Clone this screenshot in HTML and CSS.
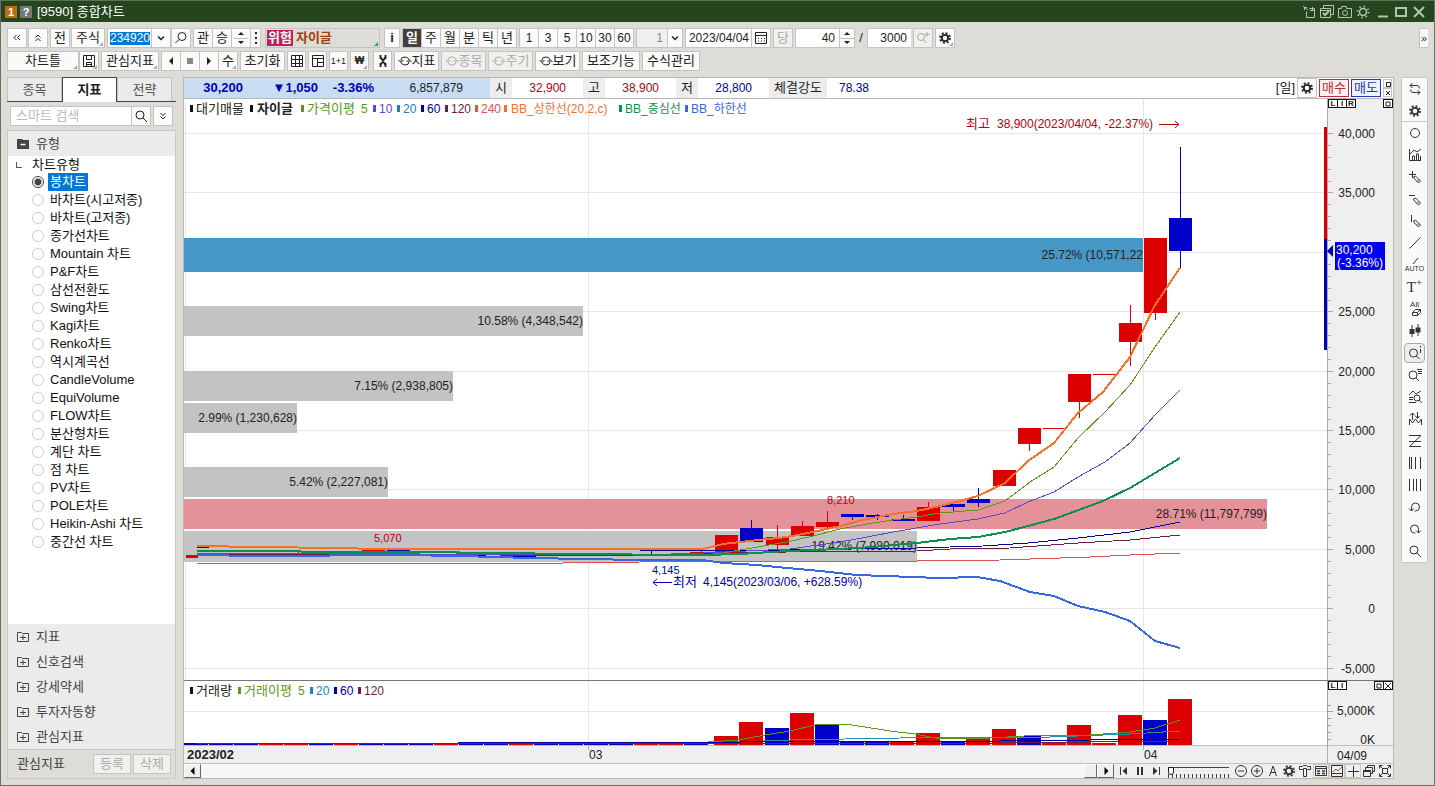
FILE: index.html
```
<!DOCTYPE html>
<html lang="ko">
<head>
    <meta charset="UTF-8">
    <meta name="viewport" content="width=device-width, initial-scale=1.0">
    <title>[9590] 종합차트</title>
    <link rel="stylesheet" href="styles.css">
</head>
<body>

    <!-- Icon set -->
    <svg class="sprite" aria-hidden="true">
        <symbol id="gear" viewBox="0 0 14 14"><circle cx="7" cy="7" r="3.2" stroke-width="1.800"/><circle cx="7" cy="7" r="5" stroke-width="1.800" stroke-dasharray="1.960 1.960"/></symbol>
        <symbol id="search" viewBox="0 0 14 14"><circle cx="6" cy="6" r="4"/><path d="M9 9l4 4"/></symbol>
        <symbol id="search-flip" viewBox="0 0 14 14"><circle cx="8" cy="5.500" r="4"/><path d="M5 8.500L1.500 12"/></symbol>
        <symbol id="down" viewBox="0 0 14 14"><path d="M4 5.500l3 3 3-3" stroke-width="1.500"/></symbol>
        <symbol id="dbl-left" viewBox="0 0 14 14"><path d="M6.500 4L4 6.500 6.500 9M10 4L7.500 6.500 10 9"/></symbol>
        <symbol id="dbl-up" viewBox="0 0 14 14"><path d="M4.500 6.500L7 4l2.500 2.500M4.500 10L7 7.500 9.500 10"/></symbol>
        <symbol id="dbl-down" viewBox="0 0 14 14"><path d="M4.500 4L7 6.500 9.500 4M4.500 7.500L7 10l2.500-2.500"/></symbol>
        <symbol id="cycle" viewBox="0 0 14 14"><path d="M3 7.500V6q0-3 4-3 3 0 4 2.500M11 6.500V8q0 3-4 3-3 0-4-2.500M0.500 6L3 8.500 5.500 6M8.500 8L11 5.500 13.500 8"/></symbol>
        <symbol id="folder-plus" viewBox="0 0 12 12"><path d="M.5 10.500v-9h4l1 1h6v8zM3 6.500h6M6 4v5"/></symbol>
        <symbol id="pencil" viewBox="0 0 14 14"><path d="M5.500 7l2-1 5 5-2 2-4-4zM11 9.500l-2 2"/></symbol>
    </svg>

    <div class="window">
        <header class="titlebar">
            <span class="badge badge-orange">1</span>
            <span class="badge badge-gray">?</span>
            <h1>[9590] 종합차트</h1>
            <div class="title-tools">
                <button type="button" aria-label="창 이동"><svg viewBox="0 0 14 14"><path d="M5 2.500H2.500V5M1 1l5 4M4.500 6.500v6h8v-9h-5M8 5.500h4M10.500 2v3"/></svg></button>
                <button type="button" aria-label="화면 선택"><svg viewBox="0 0 14 14"><path d="M3.500 3V.5h10v9H11M.5 3.500h10v9H.5zM.5 5.500h10"/><path d="M3 8l2 2 4-4" stroke-width="2"/></svg></button>
                <button type="button" aria-label="캡처"><svg viewBox="0 0 14 14"><path d="M.5 3.500h3v-2h5v2h5v9H.5z"/><circle cx="7" cy="8" r="2.500"/></svg></button>
                <button type="button" aria-label="설정"><svg viewBox="0 0 14 14"><circle cx="7" cy="7" r="3.500" stroke-width="1.500"/><circle cx="7" cy="7" r="5.500" stroke-width="2" stroke-dasharray="1.300 3.020"/></svg></button>
                <button type="button" class="ml2" aria-label="최소화"><svg viewBox="0 0 14 14"><path d="M2 11.500h10" stroke-width="2"/></svg></button>
                <button type="button" aria-label="최대화"><svg viewBox="0 0 14 14"><path d="M2 3h10v8H2z" stroke-width="2"/></svg></button>
                <button type="button" aria-label="닫기"><svg viewBox="0 0 14 14"><path d="M2 2l10 10M12 2L2 12" stroke-width="2"/></svg></button>
            </div>
        </header>

        <div class="toolbars">
            <div class="toolbar">
                <div class="group spaced">
                    <button type="button" class="btn" aria-label="처음"><svg><use href="#dbl-left"/></svg></button>
                    <button type="button" class="btn" aria-label="접기"><svg><use href="#dbl-up"/></svg></button>
                </div>
                <div class="group spaced">
                    <button type="button" class="btn">전</button>
                    <button type="button" class="btn w34 corner">주식</button>
                </div>
                <div class="group">
                    <input type="text" class="box w44 code" value="234920" aria-label="종목코드">
                    <button type="button" class="btn" aria-label="종목 목록"><svg><use href="#down"/></svg></button>
                    <button type="button" class="btn" aria-label="종목 찾기"><svg><use href="#search-flip"/></svg></button>
                </div>
                <div class="group tight">
                    <button type="button" class="btn">관</button>
                    <button type="button" class="btn">승</button>
                    <button type="button" class="btn spin" aria-label="이전 다음"><svg viewBox="0 0 14 18"><path class="solid" d="M4 6l3-3 3 3zM4 12l3 3 3-3z"/><path class="rule" d="M0 9.500h14"/></svg></button>
                    <button type="button" class="btn w11" aria-label="더보기"><svg viewBox="0 0 10 14"><path d="M5 1v12" stroke-width="2" stroke-dasharray="2 3"/></svg></button>
                </div>
                <div class="stock corner ml2"><b class="danger">위험</b><b>자이글</b></div>
                <button type="button" class="btn w16 bold ml2">i</button>
                <div class="group tight">
                    <button type="button" class="btn dark">일</button>
                    <button type="button" class="btn">주</button>
                    <button type="button" class="btn">월</button>
                    <button type="button" class="btn">분</button>
                    <button type="button" class="btn">틱</button>
                    <button type="button" class="btn">년</button>
                </div>
                <div class="group tight num">
                    <button type="button" class="btn">1</button>
                    <button type="button" class="btn">3</button>
                    <button type="button" class="btn">5</button>
                    <button type="button" class="btn">10</button>
                    <button type="button" class="btn">30</button>
                    <button type="button" class="btn">60</button>
                </div>
                <div class="group">
                    <input type="text" class="box w31 off" value="1" aria-label="주기 값" disabled>
                    <button type="button" class="btn w16" aria-label="주기 목록"><svg><use href="#down"/></svg></button>
                </div>
                <div class="group">
                    <input type="text" class="box w66 date" value="2023/04/04" aria-label="날짜">
                    <button type="button" class="btn" aria-label="달력"><svg viewBox="0 0 14 14"><path d="M1.500 1.500h11v11h-11zM1.500 4.500h11"/><path d="M4 7.500h7M4 10h7" stroke-dasharray="1 2"/></svg></button>
                </div>
                <button type="button" class="btn" disabled>당</button>
                <div class="group">
                    <input type="text" class="box w44" value="40" aria-label="표시 개수">
                    <button type="button" class="btn spin w16" aria-label="개수 조정"><svg viewBox="0 0 14 18"><path class="solid" d="M4 6l3-3 3 3zM4 12l3 3 3-3z"/><path class="rule" d="M0 9.500h14"/></svg></button>
                    <span class="slash">/</span>
                    <input type="text" class="box w44" value="3000" aria-label="전체 개수">
                </div>
                <button type="button" class="btn" aria-label="확대" disabled><svg viewBox="0 0 14 14"><circle cx="5" cy="6" r="3.500"/><path d="M7.500 9l3 3M8.500 3.500h5M11 1v5"/></svg></button>
                <button type="button" class="btn corner" aria-label="환경설정"><svg><use href="#gear"/></svg></button>
                <button type="button" class="btn more" aria-label="펼치기">»</button>
            </div>
            <div class="toolbar">
                <div class="group">
                    <button type="button" class="btn w72 corner">차트틀</button>
                    <button type="button" class="btn corner" aria-label="저장"><svg viewBox="0 0 14 14"><path d="M1.500 1.500h11v11h-11zM4.500 1.500v4h5v-4M4.500 12.500v-4h5v4M4.500 10.500h5"/></svg></button>
                </div>
                <button type="button" class="btn w57 corner">관심지표</button>
                <div class="group tight">
                    <button type="button" class="btn" aria-label="이전"><svg viewBox="0 0 14 14"><path class="solid" d="M9 3v8L5 7z"/></svg></button>
                    <button type="button" class="btn" aria-label="정지"><svg viewBox="0 0 14 14"><path class="solid gray" d="M4 4h6v6H4z"/></svg></button>
                    <button type="button" class="btn" aria-label="다음"><svg viewBox="0 0 14 14"><path class="solid" d="M5 3v8l4-4z"/></svg></button>
                    <button type="button" class="btn corner">수</button>
                </div>
                <button type="button" class="btn w45">초기화</button>
                <button type="button" class="btn w19" aria-label="표"><svg viewBox="0 0 14 14"><path d="M1.500 1.500h11v11h-11zM1.500 5.500h11M1.500 9.500h11M5.500 1.500v11M9.500 1.500v11"/></svg></button>
                <button type="button" class="btn w19" aria-label="화면분할"><svg viewBox="0 0 14 14"><path d="M1.500 1.500h11v11h-11zM1.500 4.500h11M6.500 4.500v8M6.500 8.500h6"/></svg></button>
                <button type="button" class="btn w19 tiny">1+1</button>
                <button type="button" class="btn w19 corner won">₩</button>
                <button type="button" class="btn w19 ml2" aria-label="도구"><svg viewBox="0 0 14 14"><path d="M4.500 3l5 8M9.500 3l-5 8M4.500 1v4M9.500 1v4M4.500 9v4M9.500 9v4" stroke-width="1.800"/></svg></button>
                <button type="button" class="btn w45"><svg><use href="#cycle"/></svg>지표</button>
                <button type="button" class="btn w45" disabled><svg><use href="#cycle"/></svg>종목</button>
                <button type="button" class="btn w45" disabled><svg><use href="#cycle"/></svg>주기</button>
                <button type="button" class="btn w45"><svg><use href="#cycle"/></svg>보기</button>
                <button type="button" class="btn w57">보조기능</button>
                <button type="button" class="btn w57">수식관리</button>
            </div>
        </div>

        <div class="content">
            <aside class="sidebar">
                <nav class="tabs">
                    <button type="button">종목</button>
                    <button type="button" class="active">지표</button>
                    <button type="button">전략</button>
                </nav>
                <div class="search-row">
                    <input type="search" placeholder="스마트 검색" aria-label="스마트 검색">
                    <button type="button" class="btn" aria-label="검색"><svg><use href="#search"/></svg></button>
                    <button type="button" class="btn" aria-label="검색 옵션"><svg><use href="#dbl-down"/></svg></button>
                </div>
                <div class="side-panel">
                    <button type="button" class="fold open"><svg viewBox="0 0 12 12"><path class="solid" d="M0 1h5l1 1h6v9H0z"/><path d="M3.500 6.500h5" stroke="#fff" stroke-width="1.500"/></svg>유형</button>
                    <div class="tree">
                        <p class="tree-title">차트유형</p>
                        <label><input type="radio" name="type" checked><span>봉차트</span></label>
                        <label><input type="radio" name="type"><span>바차트(시고저종)</span></label>
                        <label><input type="radio" name="type"><span>바차트(고저종)</span></label>
                        <label><input type="radio" name="type"><span>종가선차트</span></label>
                        <label><input type="radio" name="type"><span>Mountain 차트</span></label>
                        <label><input type="radio" name="type"><span>P&amp;F차트</span></label>
                        <label><input type="radio" name="type"><span>삼선전환도</span></label>
                        <label><input type="radio" name="type"><span>Swing차트</span></label>
                        <label><input type="radio" name="type"><span>Kagi차트</span></label>
                        <label><input type="radio" name="type"><span>Renko차트</span></label>
                        <label><input type="radio" name="type"><span>역시계곡선</span></label>
                        <label><input type="radio" name="type"><span>CandleVolume</span></label>
                        <label><input type="radio" name="type"><span>EquiVolume</span></label>
                        <label><input type="radio" name="type"><span>FLOW차트</span></label>
                        <label><input type="radio" name="type"><span>분산형차트</span></label>
                        <label><input type="radio" name="type"><span>계단 차트</span></label>
                        <label><input type="radio" name="type"><span>점 차트</span></label>
                        <label><input type="radio" name="type"><span>PV차트</span></label>
                        <label><input type="radio" name="type"><span>POLE차트</span></label>
                        <label><input type="radio" name="type"><span>Heikin-Ashi 차트</span></label>
                        <label><input type="radio" name="type"><span>중간선 차트</span></label>
                    </div>
                    <button type="button" class="fold"><svg><use href="#folder-plus"/></svg>지표</button>
                    <button type="button" class="fold"><svg><use href="#folder-plus"/></svg>신호검색</button>
                    <button type="button" class="fold"><svg><use href="#folder-plus"/></svg>강세약세</button>
                    <button type="button" class="fold"><svg><use href="#folder-plus"/></svg>투자자동향</button>
                    <button type="button" class="fold"><svg><use href="#folder-plus"/></svg>관심지표</button>
                    <div class="side-foot">
                        <span>관심지표</span>
                        <button type="button" class="btn w38" disabled>등록</button>
                        <button type="button" class="btn w38" disabled>삭제</button>
                    </div>
                </div>
            </aside>

            <main class="chart">
                <div class="quote">
                    <div class="quote-main">
                        <b class="price">30,200</b>
                        <b class="diff">▼1,050</b>
                        <b class="rate">-3.36%</b>
                        <span class="volume">6,857,879</span>
                    </div>
                    <span class="tag">시</span><span class="val up">32,900</span>
                    <span class="tag">고</span><span class="val up">38,900</span>
                    <span class="tag">저</span><span class="val down">28,800</span>
                    <span class="tag long">체결강도</span><span class="val short down">78.38</span>
                    <div class="quote-tools">
                        <span>[일]</span>
                        <button type="button" class="btn" aria-label="차트 설정"><svg><use href="#gear"/></svg></button>
                        <button type="button" class="trade buy">매수</button>
                        <button type="button" class="trade sell">매도</button>
                        <div class="mini">
                            <button type="button" aria-label="크게"><svg viewBox="0 0 8 8"><path d="M2.500 2.500h4v4h-4z"/></svg></button>
                            <button type="button" aria-label="닫기"><svg viewBox="0 0 8 8"><path d="M2 2l4 4M6 2L2 6"/></svg></button>
                        </div>
                    </div>
                </div>

                <div class="pane price-pane">
                    <svg id="price" viewBox="184 99 1209 581" role="img" aria-label="주가 차트">
                        <rect class="axis-bg" x="1328" y="99" width="65" height="581"/>
                        <g id="priceGrid"></g>
                        <path class="grid" d="M185.500 99V680M588.500 99V680M1143.500 99V680"/>
                        <g id="profile"></g>
                        <g class="ink">
                            <text x="583" y="325" text-anchor="end">10.58% (4,348,542)</text>
                            <text x="453" y="390" text-anchor="end">7.15% (2,938,805)</text>
                            <text x="297" y="422" text-anchor="end">2.99% (1,230,628)</text>
                            <text x="388" y="486" text-anchor="end">5.42% (2,227,081)</text>
                            <text x="1267" y="518" text-anchor="end">28.71% (11,797,799)</text>
                            <text x="917" y="550" text-anchor="end">19.42% (7,980,019)</text>
                            <text x="1143" y="259" text-anchor="end">25.72% (10,571,22</text>
                        </g>
                        <g id="candles"></g>
                        <g class="lines">
                            <polyline stroke="#e05050" points="197,563 563,563 640,562 917,561 1000,560 1090,557 1130,555 1180,553"/>
                            <polyline stroke="#701c48" points="197,554 500,555 640,555 787,552 917,551 950,549 1010,548 1078,543 1130,540 1180,535"/>
                            <polyline stroke="#0000a0" points="640,550 787,550 917,548 983,546 1028,543 1078,538 1130,532 1180,522"/>
                            <polyline stroke="#5a48d8" points="197,553 640,555 703,553 790,549 840,542 867,537 893,532 940,524 978,519 1005,513 1028,502 1054,492 1078,477 1105,462 1130,443 1155,415 1180,390"/>
                            <polyline stroke="#5c9818" points="197,551 400,551 640,555 703,555 723,553 740,550 787,542 813,536 840,529 867,524 893,520 917,517 940,513 978,510 1005,501 1030,482 1054,467 1078,438 1105,412 1130,385 1155,347 1180,312"/>
                            <polyline class="thick" stroke="#3568e0" points="197,555 260,556 400,555 460,556 530,558 640,560 703,560 723,563 757,565 787,568 820,571 857,575 940,578 977,577 1000,581 1030,592 1054,596 1078,606 1105,612 1130,621 1155,641 1180,648"/>
                            <polyline class="thick" stroke="#0c9050" points="197,551 400,552 510,553 560,554 703,555 740,554 787,551 840,549 873,547 917,543 950,539 978,537 1005,532 1028,526 1054,519 1103,501 1130,488 1155,473 1180,458"/>
                            <polyline class="thick" stroke="#f87028" points="197,546 260,547 335,548 380,549 703,549 723,544 740,542 787,537 813,532 840,526 867,519 893,514 917,511 940,506 960,501 978,496 1005,483 1028,461 1054,443 1078,413 1103,392 1130,357 1155,305 1180,268"/>
                        </g>
                        <g class="han">
                            <text class="up" x="966" y="128">최고 <tspan x="997">38,900(2023/04/04, -22.37%)</tspan></text>
                            <path d="M1159 124.500h20M1175 121l4 3.500-4 3.500" stroke="#b40014"/>
                            <text class="down" x="673" y="586">최저 <tspan x="703">4,145(2023/03/06, +628.59%)</tspan></text>
                            <path d="M672 582.500h-19M657 579l-4 3.500 4 3.500" stroke="#0000b4"/>
                        </g>
                        <g class="small">
                            <text class="up" x="374" y="542">5,070</text>
                            <text class="up" x="827" y="504">8,210</text>
                            <text class="down" x="652" y="574">4,145</text>
                        </g>
                        <g class="legend">
                            <rect x="190" y="105" width="3" height="7"/><text x="196" y="113" class="han">대기매물</text>
                            <rect x="250" y="105" width="3" height="7"/><text x="257" y="113" class="han bold">자이글</text>
                            <g fill="#5c9818"><rect x="301" y="105" width="3" height="7"/><text x="307" y="113" class="han">가격이평</text><text x="361" y="113">5</text></g>
                            <g fill="#5a48d8"><rect x="373" y="105" width="3" height="7"/><text x="379" y="113">10</text></g>
                            <g fill="#2080c0"><rect x="397" y="105" width="3" height="7"/><text x="403" y="113">20</text></g>
                            <g fill="#0000a0"><rect x="421" y="105" width="3" height="7"/><text x="427" y="113">60</text></g>
                            <g fill="#701c48"><rect x="445" y="105" width="3" height="7"/><text x="451" y="113">120</text></g>
                            <g fill="#e05050"><rect x="475" y="105" width="3" height="7"/><text x="481" y="113">240</text></g>
                            <g fill="#f07030"><rect x="504" y="105" width="3" height="7"/><text x="511" y="113">BB_상한선(20,2,c)</text></g>
                            <g fill="#0c9050"><rect x="619" y="105" width="3" height="7"/><text x="625" y="113">BB_중심선</text></g>
                            <g fill="#3568e0"><rect x="685" y="105" width="3" height="7"/><text x="691" y="113">BB_하한선</text></g>
                        </g>
                        <g id="priceAxis" class="axis"></g>
                        <rect x="1324" y="127" width="3" height="112" fill="#d40000"/>
                        <rect x="1324" y="239" width="3" height="111" fill="#0000b4"/>
                        <path class="solid down" d="M1333 245v12l-6-6z"/>
                        <rect x="1335" y="242" width="50" height="28" fill="#0000f0"/>
                        <g fill="#fff"><text x="1336" y="254">30,200</text><text x="1337" y="267">(-3.36%)</text></g>
                    </svg>
                    <div class="pane-tools">
                        <button type="button">L</button><button type="button">I</button><button type="button">R</button>
                        <button type="button" class="last" aria-label="창 확대"><svg viewBox="0 0 8 8"><path d="M2 2h4v4H2z"/></svg></button>
                    </div>
                </div>

                <div class="pane volume-pane">
                    <svg id="volume" viewBox="184 681 1209 65" role="img" aria-label="거래량 차트">
                        <rect class="axis-bg" x="1328" y="681" width="65" height="65"/>
                        <path class="grid" d="M184 711.500H1328M588.500 681V746M1143.500 681V746"/>
                        <g id="volumeBars"></g>
                        <g class="lines">
                            <polyline stroke="#5c9818" points="708,742 738,740 765,735 790,731 815,725 845,724 865,727 890,731 915,734 940,739 990,738 1041,735 1090,735 1130,732 1155,728 1180,720"/>
                            <polyline stroke="#2090b0" points="738,742 790,740 900,738 1000,737 1050,737 1130,734 1180,731"/>
                            <polyline stroke="#0000a0" points="184,744 740,742 1000,741 1180,739"/>
                            <polyline stroke="#701c48" points="196,743 1000,743 1180,741"/>
                        </g>
                        <path d="M184 745.500H1393" stroke="#c8b8c8"/>
                        <path d="M1327.500 681V746M1328 711.500h5M1328 705.500h3M1328 718.500h3M1328 725.500h3M1328 732.500h3M1328 739.500h3" stroke="#a0a0a0"/>
                        <g class="legend">
                            <rect x="190" y="687" width="3" height="7"/><text x="196" y="695" class="han">거래량</text>
                            <g fill="#5c9818"><rect x="238" y="687" width="3" height="7"/><text x="244" y="695" class="han">거래이평</text><text x="298" y="695">5</text></g>
                            <g fill="#2080c0"><rect x="310" y="687" width="3" height="7"/><text x="316" y="695">20</text></g>
                            <g fill="#0000a0"><rect x="334" y="687" width="3" height="7"/><text x="340" y="695">60</text></g>
                            <g fill="#701c48"><rect x="358" y="687" width="3" height="7"/><text x="364" y="695">120</text></g>
                        </g>
                        <g text-anchor="end"><text x="1375" y="715">5,000K</text><text x="1375" y="744">0K</text></g>
                    </svg>
                    <div class="pane-tools">
                        <button type="button">L</button><button type="button">I</button>
                        <button type="button" class="last" aria-label="창 확대"><svg viewBox="0 0 8 8"><path d="M2 2h4v4H2z"/></svg></button>
                        <button type="button" aria-label="창 닫기"><svg viewBox="0 0 8 8"><path d="M1 1l6 6M7 1L1 7"/></svg></button>
                    </div>
                </div>

                <svg class="dates" viewBox="184 746 1209 17" role="img" aria-label="날짜 축">
                    <path d="M588.500 746v4M1143.500 746v4M1327.500 746v17" stroke="#b0b0b0"/>
                    <text x="187" y="759" class="han bold">2023/02</text>
                    <text x="589" y="759">03</text>
                    <text x="1144" y="759">04</text>
                    <text x="1337" y="760">04/09</text>
                </svg>

                <div class="bottom">
                    <button type="button" class="raised" aria-label="왼쪽"><svg viewBox="0 0 8 8"><path class="solid" d="M5.500 0v8l-4-4z"/></svg></button>
                    <div class="track"><div class="thumb"></div></div>
                    <button type="button" class="raised" aria-label="오른쪽"><svg viewBox="0 0 8 8"><path class="solid" d="M2.500 0v8l4-4z"/></svg></button>
                    <div class="bottom-tools">
                        <button type="button" aria-label="맨 처음"><svg viewBox="0 0 14 14"><path d="M3.500 3v8"/><path class="solid" d="M10 3v8L5.500 7z"/></svg></button>
                        <button type="button" aria-label="일시정지"><svg viewBox="0 0 14 14"><path d="M5 3v8M9 3v8" stroke-width="2"/></svg></button>
                        <button type="button" aria-label="맨 끝"><svg viewBox="0 0 14 14"><path d="M10.500 3v8"/><path class="solid" d="M4 3v8l4.500-4z"/></svg></button>
                        <input type="range" min="0" max="100" value="0" aria-label="배율">
                        <button type="button" aria-label="축소"><svg viewBox="0 0 14 14"><circle cx="7" cy="7" r="5.500"/><path d="M4 7h6"/></svg></button>
                        <button type="button" aria-label="확대"><svg viewBox="0 0 14 14"><circle cx="7" cy="7" r="5.500"/><path d="M4 7h6M7 4v6"/></svg></button>
                        <button type="button" aria-label="글자"><svg viewBox="0 0 14 14"><path d="M3.500 12L7 2l3.500 10M4.500 8.500h5"/></svg></button>
                        <button type="button" aria-label="설정"><svg><use href="#gear"/></svg></button>
                        <button type="button" aria-label="도구"><svg viewBox="0 0 14 14"><path d="M1.500 5.500v-3h3l1-1h3l1 1h3v3h-3l-1-1h-3l-1 1zM5.500 5v7.500h3V5"/></svg></button>
                        <button type="button" class="framed" aria-label="정보창"><svg viewBox="0 0 14 14"><path d="M1.500 2.500h11v9h-11zM1.500 4.500h11"/><path d="M3 7h3M3 9.500h3M8 7h3M8 9.500h3" stroke-width="1.500"/></svg></button>
                        <button type="button" class="framed" aria-label="차트"><svg viewBox="0 0 14 14"><path d="M1.500 1.500h11v11h-11zM1.500 9.500h11"/><path d="M3 8l3-3 2 2 4-4" stroke="#a04050"/></svg></button>
                        <button type="button" class="framed" aria-label="십자선"><svg viewBox="0 0 14 14"><path d="M2 7.500h11M7.500 2v11"/></svg></button>
                        <button type="button" aria-label="여러 창"><svg viewBox="0 0 14 14"><path d="M5.500 4V1.500h7v6H11M3.500 6V3.500h7v6H9M1.500 6.500h7v6h-7z"/><path d="M1.500 7h7" stroke-width="2"/></svg></button>
                        <button type="button" aria-label="전체 화면"><svg viewBox="0 0 14 14"><path d="M1.500 4.500v-3h3M9.500 1.500h3v3M12.500 9.500v3h-3M4.500 12.500h-3v-3M4.500 4.500h5v5h-5zM2 2l3 3M12 2L9 5M2 12l3-3M12 12L9 9"/></svg></button>
                    </div>
                </div>
            </main>

            <aside class="side-tools">
                <button type="button" aria-label="새로고침"><svg viewBox="0 0 14 14"><path d="M4.500 1L2 3.500 4.500 6M2 3.500h7q2.500 0 2.500 3M9.500 13l2.500-2.500L9.500 8M12 10.500H5q-2.500 0-2.500-3"/></svg></button>
                <button type="button" class="sep" aria-label="설정"><svg><use href="#gear"/></svg></button>
                <button type="button" aria-label="원"><svg viewBox="0 0 14 14"><circle cx="7" cy="7" r="4.500"/></svg></button>
                <button type="button" aria-label="지표 차트"><svg viewBox="0 0 14 14"><path d="M1.500 1v11.500H13M2 6l4-4 3 2 4-3M4.500 12V8h2v4M8.500 12V6h2v6M12.500 12V8"/></svg></button>
                <button type="button" aria-label="십자 그리기"><svg viewBox="0 0 14 14"><path d="M1 4.500h7M4.500 1v7"/><use href="#pencil"/></svg></button>
                <button type="button" aria-label="수평선"><svg viewBox="0 0 14 14"><path d="M1 3.500h6"/><use href="#pencil"/></svg></button>
                <button type="button" aria-label="수직선"><svg viewBox="0 0 14 14"><path d="M3.500 1v7"/><use href="#pencil"/></svg></button>
                <button type="button" aria-label="추세선"><svg viewBox="0 0 14 14"><path d="M1.500 12.500l11-11"/></svg></button>
                <button type="button" class="auto" aria-label="자동 추세선"><svg viewBox="0 0 14 8"><path d="M5 7l5-6"/></svg>AUTO</button>
                <button type="button" class="letter">T<sup>+</sup></button>
                <button type="button" class="all" aria-label="모두 지우기">All<svg viewBox="0 0 14 8"><path d="M4.500 3.500l3-3h5l-3 3zM4.500 3.500v3h5l3-3v-3M9.500 3.500v3"/></svg></button>
                <button type="button" aria-label="봉"><svg viewBox="0 0 14 14"><path d="M4 1v12M10 0v12"/><path class="solid" d="M1.500 5h5v5h-5zM7.500 3.500h5v5h-5z"/></svg></button>
                <button type="button" class="on" aria-label="정보 조회"><svg viewBox="0 0 14 14"><circle cx="5.500" cy="7" r="4"/><path d="M8.500 10l3 3M12.500 3v4M12.500 0v1.500"/></svg></button>
                <button type="button" aria-label="목록 조회"><svg viewBox="0 0 14 14"><circle cx="5" cy="7" r="4"/><path d="M8 10l3 3M9 1.500h5M10 3.500h4M10 5.500h4"/></svg></button>
                <button type="button" aria-label="차트 조회"><svg viewBox="0 0 14 14"><circle cx="9" cy="8" r="3"/><path d="M11 10l3 3M1 5l4-4 3 3 5-3M1 7.500h4M1 9.500h4M1 12.500h7"/></svg></button>
                <button type="button" aria-label="패턴"><svg viewBox="0 0 14 14"><path d="M1.500 13V7l3 4 3-4 3 4 3-4v6M4.500 8V1M2 3.500L4.500 1 7 3.500M9.500 0v6M7.500 4l2 2.500 2-2.500"/></svg></button>
                <button type="button" aria-label="지그재그"><svg viewBox="0 0 14 14"><path d="M1 1.500h12L1.500 12.500H13M1 7.500h12"/></svg></button>
                <button type="button" aria-label="피보나치 시간대"><svg viewBox="0 0 14 14"><path d="M1.500 1v12M3.500 1v12M7.500 1v12M12.500 1v12"/></svg></button>
                <button type="button" aria-label="등간격"><svg viewBox="0 0 14 14"><path d="M1.500 1v12M5.500 1v12M8.500 1v12M12.500 1v12"/></svg></button>
                <button type="button" aria-label="되돌리기"><svg viewBox="0 0 14 14"><path d="M3.500 11V7q0-4 4-4t4 4-4 4H6.500M1 8.500L3.500 11 6 8.500"/></svg></button>
                <button type="button" aria-label="다시 실행"><svg viewBox="0 0 14 14"><path d="M10.500 11V7q0-4-4-4t-4 4 4 4h1M8 8.500l2.500 2.500L13 8.500"/></svg></button>
                <button type="button" aria-label="돋보기"><svg><use href="#search"/></svg></button>
            </aside>
        </div>
    </div>

    <script>
        const RED = '#dc0000';
        const BLUE = '#0000c8';

        function draw(id, tag, attrs, text) {
            const el = document.createElementNS('http://www.w3.org/2000/svg', tag);
            for (const key in attrs) {
                el.setAttribute(key, attrs[key]);
            }
            if (text) {
                el.textContent = text;
            }
            document.getElementById(id).appendChild(el);
        }

        // Price grid and axis, one step is 5,000
        for (let i = 0; i < 10; i++) {
            const y = Math.round(133 + i * 59.4) + 0.5;
            draw('priceGrid', 'path', { class: 'grid', d: `M184 ${y}H1328` });
            draw('priceAxis', 'path', { d: `M1328 ${y}h5` });
            if (i !== 2) {
                draw('priceAxis', 'text', { x: 1375, y: y + 4, 'text-anchor': 'end' }, (40000 - i * 5000).toLocaleString('en-US'));
            }
            for (let k = 1; k < 5 && y + k * 12 < 680; k++) {
                draw('priceAxis', 'path', { d: `M1328 ${Math.round(y + k * 11.9) + 0.5}h3` });
            }
        }
        draw('priceAxis', 'path', { d: 'M1327.5 99V680' });

        // Volume by price: y, height, right edge, colour
        [
            [238, 34, 1143, '#4797c6'], [306, 30, 583, '#c3c3c3'], [371, 30, 453, '#c3c3c3'],
            [403, 30, 297, '#c3c3c3'], [467, 30, 388, '#c3c3c3'], [499, 30, 1267, '#e59199'],
            [531, 31, 917, '#c3c3c3']
        ].forEach(([y, height, right, fill]) => {
            draw('profile', 'rect', { x: 184, y, width: right - 184, height, fill });
        });

        // Candles: left, body top, body bottom, wick top, wick bottom, colour
        [
            [1169, 218, 251, 147, 268, BLUE], [1144, 238, 313, 238, 320, RED], [1119, 323, 342, 305, 366, RED],
            [1093, 374, 375, 374, 375, RED], [1068, 374, 402, 374, 418, RED], [1043, 428, 429, 428, 429, RED],
            [1018, 428, 444, 428, 451, RED], [993, 470, 486, 470, 486, RED], [967, 499, 503, 488, 507, BLUE],
            [942, 504, 507, 502, 512, BLUE], [917, 507, 521, 502, 521, RED], [892, 519, 521, 515, 521, BLUE],
            [866, 515, 517, 514, 520, BLUE], [841, 514, 517, 514, 520, BLUE], [816, 522, 527, 511, 529, RED],
            [791, 526, 536, 521, 536, RED], [766, 537, 545, 525, 549, RED], [740, 528, 542, 520, 542, BLUE],
            [715, 535, 554, 535, 554, RED], [690, 552, 554, 550, 554, RED], [640, 550, 551, 548, 556, BLUE],
            [463, 554, 556, 553, 557, BLUE], [513, 556, 558, 555, 559, BLUE], [387, 550, 551, 549, 553, BLUE],
            [362, 550, 552, 549, 553, RED], [287, 553, 555, 551, 557, RED], [197, 547, 548, 547, 548, BLUE],
            [186, 555, 558, 555, 558, RED]
        ].forEach(([x, top, bottom, high, low, fill]) => {
            draw('candles', 'rect', { x, y: top, width: x < 200 ? 12 : 23, height: bottom - top, fill });
            draw('candles', 'rect', { x: x + 11, y: high, width: 1, height: low - high, fill });
        });

        // Volume bars
        for (let x = 184, i = 0; x < 700; x += 25, i++) {
            draw('volumeBars', 'rect', { x, y: 743, width: 24, height: 2, fill: [3, 4, 6, 10, 13, 18, 19].includes(i) ? RED : BLUE });
        }
        [
            [714, 736, RED], [739, 722, RED], [765, 728, BLUE], [790, 713, RED], [815, 724, BLUE],
            [840, 741, BLUE], [865, 741, BLUE], [890, 742, RED], [916, 733, RED], [941, 741, BLUE],
            [966, 738, RED], [992, 729, RED], [1017, 736, BLUE], [1042, 743, RED], [1067, 725, RED],
            [1092, 743, RED], [1118, 715, RED], [1143, 720, BLUE], [1168, 699, RED]
        ].forEach(([x, y, fill]) => {
            draw('volumeBars', 'rect', { x, y, width: 24, height: 745 - y, fill });
        });
    </script>

</body>
</html>
```
FILE: styles.css
```
* {
    box-sizing: border-box;
}

body {
    margin: 0;
    font-family: "Liberation Sans", "Noto Sans CJK KR", sans-serif;
    font-size: 13px;
    line-height: 16px;
    color: #222;
}

button,
input {
    font: inherit;
    color: inherit;
    margin: 0;
    padding: 0;
}

button {
    display: flex;
    align-items: center;
    justify-content: center;
    border: 0;
    background: none;
    white-space: nowrap;
}

svg {
    display: block;
    flex: none;
    fill: none;
    stroke: currentColor;
}

svg .solid {
    fill: currentColor;
    stroke: none;
}

svg .gray {
    fill: #888;
}

svg .rule {
    stroke: #bbb;
}

button svg {
    width: 14px;
    height: 14px;
}

.sprite {
    position: absolute;
    width: 0;
    height: 0;
}

.window {
    display: flex;
    flex-direction: column;
    min-height: 100vh;
    border: 1px solid #6c6e68;
    border-top-color: #5a7454;
    background: #dddcd6;
}

/* Title bar */
.titlebar {
    display: flex;
    align-items: center;
    gap: 3px;
    height: 21px;
    padding: 0 8px 0 4px;
    background: #24451d;
    color: #fff;
}

.titlebar h1 {
    margin: 0 0 0 2px;
    font-size: 13px;
    font-weight: normal;
}

.badge {
    width: 12px;
    height: 12px;
    line-height: 12px;
    font-size: 11px;
    font-weight: bold;
    text-align: center;
}

.badge-orange {
    background: #c46a08;
}

.badge-gray {
    background: #77787a;
}

.title-tools {
    display: flex;
    gap: 4px;
    margin-left: auto;
    color: #b4c4ae;
}

/* Toolbars */
.toolbars {
    display: flex;
    flex-direction: column;
    gap: 3px;
    padding: 6px;
}

.toolbar {
    display: flex;
    gap: 2px;
}

.group {
    display: flex;
}

.spaced {
    gap: 1px;
}

.tight .btn + .btn {
    margin-left: -1px;
}

.ml2 {
    margin-left: 2px;
}

.btn {
    position: relative;
    flex: none;
    width: 20px;
    height: 20px;
    border: 1px solid #c4c4c0;
    background: #fafafa;
    color: #222;
}

.btn:disabled {
    color: #aaa;
    background: #f0f0ee;
}

.corner::after {
    content: "";
    position: absolute;
    right: 1px;
    bottom: 1px;
    border: 2px solid #aaa;
    border-top-color: transparent;
    border-left-color: transparent;
}

.num .btn {
    font-size: 12px;
}

.dark {
    background: #404040;
    color: #fff;
    font-weight: bold;
}

.bold {
    font-weight: bold;
}

.tiny {
    font-size: 9px;
}

.won {
    font-size: 10px;
    font-weight: bold;
}

.w11 { width: 11px; }
.w16 { width: 16px; }
.w19 { width: 19px; }
.w31 { width: 31px; }
.w34 { width: 34px; }
.w38 { width: 38px; }
.w44 { width: 44px; }
.w45 { width: 45px; }
.w57 { width: 58px; }
.w66 { width: 66px; }
.w72 { width: 72px; }

.spin svg {
    height: 18px;
}

.box {
    height: 20px;
    padding: 0 4px;
    border: 1px solid #c4c4c0;
    border-right: 0;
    background: #fff;
    font-size: 12px;
    text-align: right;
}

.code {
    padding: 0 0 0 2px;
    text-align: left;
    color: #fff;
    background: linear-gradient(#0078d7, #0078d7) 2px 3px / 40px 13px no-repeat #fff;
}

.date {
    padding: 0 2px;
}

.off {
    color: #888;
    background: #efefef;
}

.slash {
    width: 12px;
    line-height: 20px;
    text-align: center;
}

.stock {
    position: relative;
    display: flex;
    align-items: center;
    gap: 3px;
    width: 115px;
    height: 20px;
    padding-left: 1px;
    border: 1px solid #c4c4c0;
    color: #a04010;
}

.stock.corner::after {
    border-right-color: #30a060;
    border-bottom-color: #30a060;
}

.danger {
    padding: 0 1px;
    background: #c02058;
    color: #fff;
}

.more {
    width: 9px;
    margin-left: auto;
    border-right: 0;
    font-size: 11px;
}

/* Content */
.content {
    display: flex;
    flex: 1;
    align-items: stretch;
    gap: 7px;
    padding: 0 6px 6px 6px;
}

.sidebar {
    display: flex;
    flex-direction: column;
    width: 169px;
}

.tabs {
    display: flex;
    height: 25px;
    border-bottom: 1px solid #444;
}

.tabs button {
    width: 55px;
    border: 1px solid #c4c4c0;
    border-bottom: 0;
    background: #ebebeb;
    color: #555;
}

.tabs .active {
    height: 25px;
    border-color: #444;
    background: #fff;
    color: #222;
    font-weight: bold;
}

.search-row {
    display: flex;
    height: 20px;
    margin: 4px 3px;
}

.search-row input {
    flex: 1;
    min-width: 0;
    padding: 0 5px;
    border: 1px solid #c4c4c0;
    border-right: 0;
    background: #fff;
}

.search-row input::placeholder {
    color: #bbb;
}

.search-row .btn + .btn {
    margin-left: 2px;
}

.side-panel {
    display: flex;
    flex: 1;
    flex-direction: column;
    border: 1px solid #c8c8c4;
    background: #fff;
}

.fold {
    justify-content: flex-start;
    gap: 7px;
    height: 25px;
    padding-left: 9px;
    background: #ebebeb;
    color: #444;
}

.fold svg {
    width: 12px;
    height: 12px;
}

.tree {
    flex: 1;
    color: #111;
}

.tree-title {
    margin: 0;
    padding-left: 24px;
    line-height: 17px;
}

.tree-title::before {
    content: "";
    float: left;
    width: 5px;
    height: 5px;
    margin: 6px 0 0 -16px;
    border: solid #555;
    border-width: 0 0 1px 1px;
}

.tree label {
    display: flex;
    align-items: center;
    gap: 4px;
    height: 18px;
    padding-left: 24px;
}

.tree input {
    appearance: none;
    width: 12px;
    height: 12px;
    border: 1px solid #ccc;
    border-radius: 50%;
}

.tree input:checked {
    border-color: #444;
    background: radial-gradient(#444 3px, transparent 4px);
}

.tree span {
    padding: 0 2px;
    line-height: 18px;
}

.tree input:checked + span {
    background: #0078d7;
    color: #fff;
}

.side-foot {
    display: flex;
    align-items: center;
    gap: 2px;
    height: 29px;
    padding: 0 4px 0 9px;
    border-top: 1px solid #c8c8c4;
    background: #dddcd6;
    color: #444;
}

.side-foot span {
    margin-right: auto;
}

/* Chart */
.chart {
    display: flex;
    flex: 1;
    flex-direction: column;
    min-width: 0;
    border: 1px solid #b8b8b4;
    background: #fff;
}

.quote {
    display: flex;
    height: 21px;
    border-bottom: 1px solid #b8b8b4;
    line-height: 20px;
}

.quote-main {
    display: grid;
    grid-template-columns: 59px 75px 56px 89px;
    width: 306px;
    background: #c8dcf2;
    color: #0000b4;
    text-align: right;
}

.volume {
    font-size: 12px;
    color: #222;
}

.tag {
    width: 22px;
    background: #ededed;
    text-align: center;
}

.long {
    width: 58px;
}

.val {
    width: 71px;
    padding-right: 17px;
    font-size: 12px;
    text-align: right;
}

.short {
    width: 42px;
    padding-right: 0;
}

.up {
    color: #b40014;
}

.down {
    color: #0000b4;
}

.quote-tools {
    display: flex;
    align-items: center;
    gap: 2px;
    margin-left: auto;
    padding-right: 1px;
}

.trade {
    width: 30px;
    height: 18px;
    border: 1px solid;
}

.buy {
    color: #b83040;
    background: #fdf0f0;
}

.sell {
    color: #2838b0;
    background: #eef4fe;
}

.mini button {
    width: 9px;
    height: 9px;
    border: 1px solid #c4c4c0;
}

.mini svg,
.pane-tools svg,
.raised svg {
    width: 8px;
    height: 8px;
}

.pane {
    position: relative;
}

.price-pane {
    flex: 1;
}

.pane > svg,
.dates {
    width: 100%;
    height: auto;
}

.volume-pane {
    border-top: 1px solid #777;
}

.chart text {
    fill: currentColor;
    stroke: none;
    font-size: 12px;
    white-space: pre;
}

.chart .han,
.chart .han text {
    font-size: 13px;
}

.chart tspan {
    font-size: 12px;
}

.chart .small text {
    font-size: 11px;
}

.chart rect {
    stroke: none;
}

.legend rect {
    fill: #111;
}

.legend g rect,
.legend g text {
    fill: inherit;
}

.chart g[fill] text {
    fill: inherit;
}

.axis-bg {
    fill: #efefef;
}

.grid {
    stroke: #e6e6e6;
}

.axis path {
    stroke: #a8a8a8;
}

.lines {
    shape-rendering: crispEdges;
}

.lines .thick {
    stroke-width: 2px;
}

.pane-tools {
    position: absolute;
    top: 0;
    right: 0;
    display: flex;
    width: 65px;
}

.pane-tools button {
    width: 10px;
    height: 9px;
    margin-right: -1px;
    border: 1px solid #111;
    background: #fff;
    font-size: 8px;
    font-weight: bold;
    line-height: 8px;
}

.pane-tools .last {
    margin-left: auto;
}

.pane-tools button:last-child {
    margin-right: 0;
}

.dates {
    background: #efefef;
}

.bottom {
    display: flex;
    height: 15px;
    border-top: 1px solid #c0c0c0;
}

.raised {
    width: 17px;
    border: 1px solid #fff;
    border-right-color: #666;
    border-bottom-color: #666;
    background: #f0f0f0;
    color: #000;
}

.track {
    display: flex;
    flex: 1;
    justify-content: flex-end;
    background: #f7f7f7;
}

.thumb {
    width: 13px;
    border: 1px solid #fff;
    border-right-color: #666;
    border-bottom-color: #666;
    background: #f0f0f0;
}

.bottom-tools {
    display: flex;
    padding-left: 2px;
    background: #efefef;
    color: #333;
}

.bottom-tools button {
    width: 16px;
}

.bottom-tools .framed {
    outline: 1px solid #c8c8c4;
    outline-offset: -1px;
}

.bottom-tools input {
    appearance: none;
    width: 61px;
    height: 14px;
    margin: 0 4px;
    background:
        linear-gradient(#444, #444) 0 3px / 100% 1px no-repeat,
        repeating-linear-gradient(90deg, #444 0 1px, transparent 1px 4px) 0 10px / 100% 4px no-repeat;
}

.bottom-tools input::-webkit-slider-thumb {
    appearance: none;
    width: 6px;
    height: 8px;
    border: 1px solid #222;
    border-radius: 0 0 3px 3px;
    background: #fff;
}

/* Drawing tools */
.side-tools {
    display: flex;
    flex-direction: column;
    align-self: flex-start;
    width: 27px;
    border: 1px solid #c8c8c4;
    background: #fafafa;
    color: #333;
}

.side-tools button {
    height: 22px;
}

.side-tools .sep {
    border-bottom: 1px solid #c8c8c4;
}

.side-tools .on {
    margin: 1px 2px;
    height: 20px;
    border: 1px solid #aaa;
    border-radius: 4px;
    background: #eee;
}

.side-tools .auto,
.side-tools .all {
    flex-direction: column;
    font-size: 7px;
    line-height: 8px;
}

.side-tools .auto svg,
.side-tools .all svg {
    width: 14px;
    height: 8px;
}

.side-tools .all {
    font-size: 8px;
}

.side-tools .letter {
    font-family: "Liberation Serif", serif;
    font-size: 15px;
}

.side-tools sup {
    align-self: flex-start;
    font-size: 11px;
    line-height: 12px;
}
```
